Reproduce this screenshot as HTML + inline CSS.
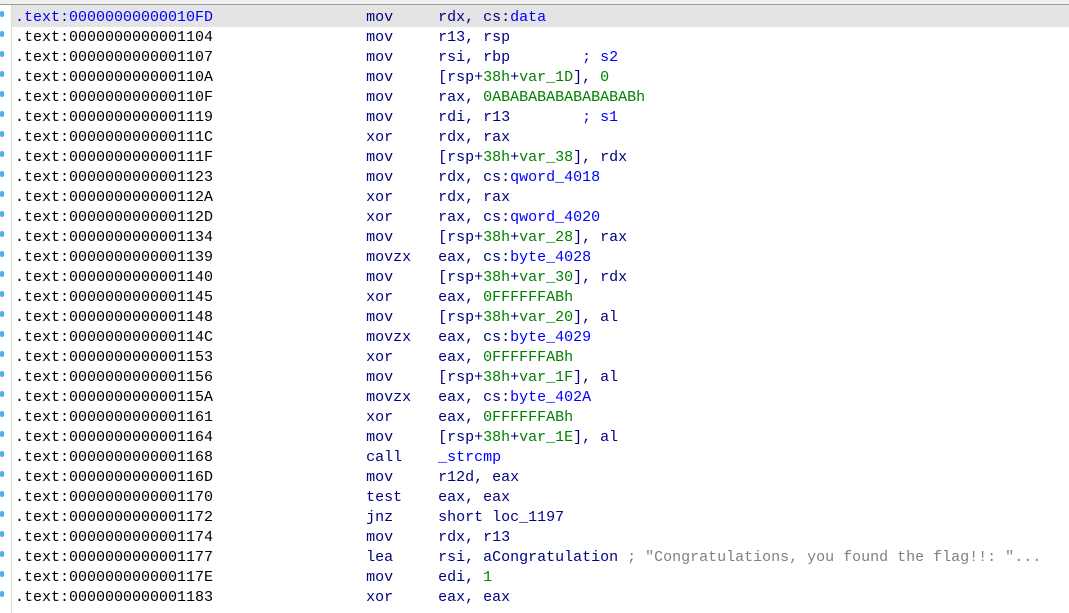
<!DOCTYPE html>
<html><head><meta charset="utf-8"><style>
html,body{margin:0;padding:0;background:#fff;width:1069px;height:613px;overflow:hidden}
.top{position:absolute;left:0;top:0;width:1069px;height:4px;background:#f0f0f0;border-bottom:1px solid #9a9a9a}
.vl{position:absolute;left:11px;top:5px;width:1px;height:608px;background:#dcdcdc}
.hl{position:absolute;left:12px;top:5px;width:1057px;height:22px;background:#e4e4e4}
.dot{position:absolute;left:0;width:4px;height:6px;background:#4db3ec;border-radius:2px}
pre{position:absolute;left:15px;top:8px;margin:0;font-family:"Liberation Mono",monospace;font-size:15px;line-height:20px;color:#000080;white-space:pre}
.a{color:#000}.a0{color:#0000ff}
.n{color:#008000}.b{color:#0000ff}.c{color:#808080}.s{color:#808080}
</style></head><body>
<div class="top"></div><div class="hl"></div><div class="vl"></div>
<div id="dots"></div>
<pre><span class="a0">.text:00000000000010FD</span>                 mov     rdx, cs:<span class="b">data</span>
<span class="a">.text:0000000000001104</span>                 mov     r13, rsp
<span class="a">.text:0000000000001107</span>                 mov     rsi, rbp        <span class="b">; s2</span>
<span class="a">.text:000000000000110A</span>                 mov     [rsp+<span class="n">38h</span>+<span class="n">var_1D</span>], <span class="n">0</span>
<span class="a">.text:000000000000110F</span>                 mov     rax, <span class="n">0ABABABABABABABABh</span>
<span class="a">.text:0000000000001119</span>                 mov     rdi, r13        <span class="b">; s1</span>
<span class="a">.text:000000000000111C</span>                 xor     rdx, rax
<span class="a">.text:000000000000111F</span>                 mov     [rsp+<span class="n">38h</span>+<span class="n">var_38</span>], rdx
<span class="a">.text:0000000000001123</span>                 mov     rdx, cs:<span class="b">qword_4018</span>
<span class="a">.text:000000000000112A</span>                 xor     rdx, rax
<span class="a">.text:000000000000112D</span>                 xor     rax, cs:<span class="b">qword_4020</span>
<span class="a">.text:0000000000001134</span>                 mov     [rsp+<span class="n">38h</span>+<span class="n">var_28</span>], rax
<span class="a">.text:0000000000001139</span>                 movzx   eax, cs:<span class="b">byte_4028</span>
<span class="a">.text:0000000000001140</span>                 mov     [rsp+<span class="n">38h</span>+<span class="n">var_30</span>], rdx
<span class="a">.text:0000000000001145</span>                 xor     eax, <span class="n">0FFFFFFABh</span>
<span class="a">.text:0000000000001148</span>                 mov     [rsp+<span class="n">38h</span>+<span class="n">var_20</span>], al
<span class="a">.text:000000000000114C</span>                 movzx   eax, cs:<span class="b">byte_4029</span>
<span class="a">.text:0000000000001153</span>                 xor     eax, <span class="n">0FFFFFFABh</span>
<span class="a">.text:0000000000001156</span>                 mov     [rsp+<span class="n">38h</span>+<span class="n">var_1F</span>], al
<span class="a">.text:000000000000115A</span>                 movzx   eax, cs:<span class="b">byte_402A</span>
<span class="a">.text:0000000000001161</span>                 xor     eax, <span class="n">0FFFFFFABh</span>
<span class="a">.text:0000000000001164</span>                 mov     [rsp+<span class="n">38h</span>+<span class="n">var_1E</span>], al
<span class="a">.text:0000000000001168</span>                 call    <span class="b">_strcmp</span>
<span class="a">.text:000000000000116D</span>                 mov     r12d, eax
<span class="a">.text:0000000000001170</span>                 test    eax, eax
<span class="a">.text:0000000000001172</span>                 jnz     short loc_1197
<span class="a">.text:0000000000001174</span>                 mov     rdx, r13
<span class="a">.text:0000000000001177</span>                 lea     rsi, aCongratulation <span class="c">; "Congratulations, you found the flag!!: "...</span>
<span class="a">.text:000000000000117E</span>                 mov     edi, <span class="n">1</span>
<span class="a">.text:0000000000001183</span>                 xor     eax, eax</pre>
<script>
var d=document.getElementById('dots'),h='';
for(var i=0;i<30;i++){h+='<div class="dot" style="top:'+(11+i*20)+'px"></div>';}
d.innerHTML=h;
</script>
</body></html>
